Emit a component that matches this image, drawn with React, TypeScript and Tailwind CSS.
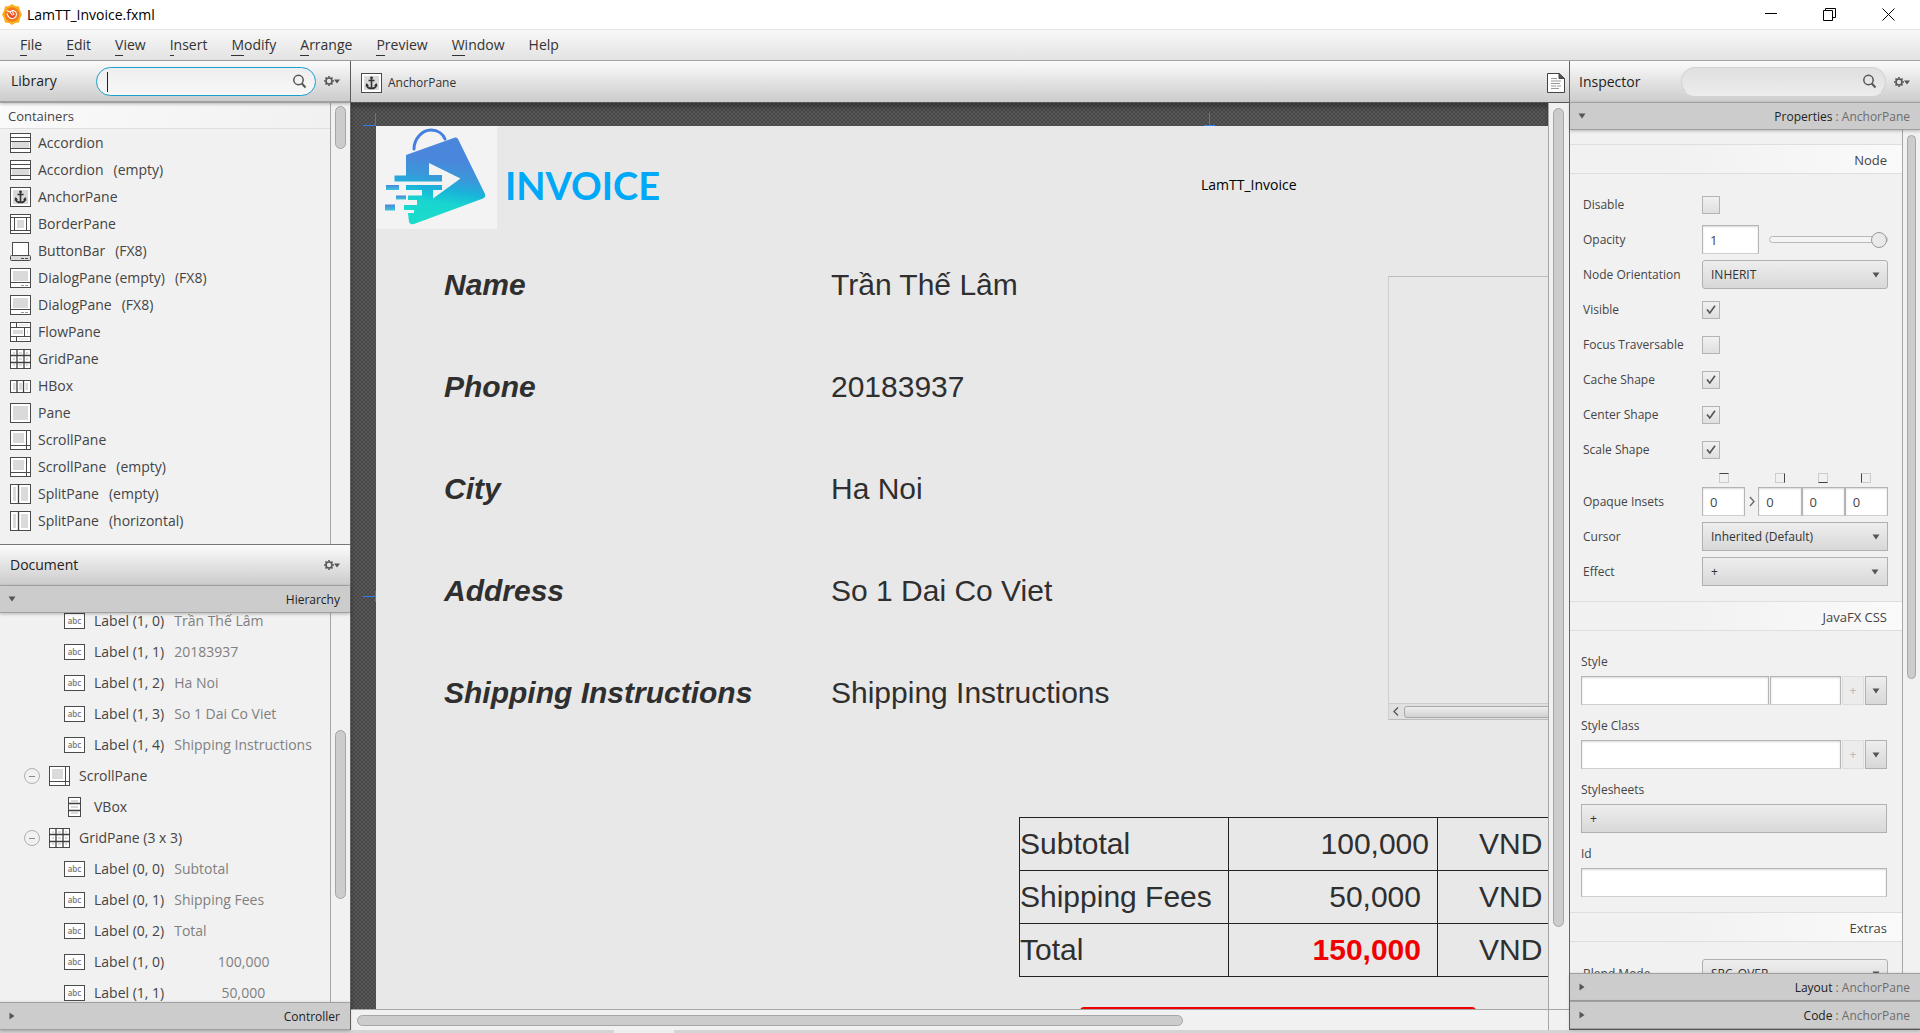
import React from "react";

const FONT = "font-['Open_Sans','Noto_Sans',sans-serif]";

/* ---------- icons ---------- */

type IconName =
  | "accordion"
  | "anchor"
  | "border"
  | "buttonbar"
  | "dialog"
  | "flow"
  | "grid"
  | "hbox"
  | "vbox"
  | "pane"
  | "scroll"
  | "split";

function NodeIcon({ name }: { name: IconName }) {
  const line = { stroke: "#4b4b4b", strokeWidth: 1, fill: "none" };
  const grey = "#dadada";
  const frame = <rect x="0.5" y="0.5" width="20" height="19" fill="#fff" stroke="#4b4b4b" />;
  const drawings: Record<IconName, React.ReactNode> = {
    accordion: (
      <>
        {frame}
        <rect x="2" y="9" width="17" height="6" fill={grey} />
        <path d="M0 4.5H21M0 8.5H21M0 15.5H21" {...line} />
      </>
    ),
    anchor: (
      <>
        {frame}
        <rect x="3" y="3" width="15" height="14" fill={grey} />
        <path d="M10.5 4V15.5M7.5 7.5H13.5M5.5 11.5C6 14.5 8 15.5 10.5 15.5S15 14.5 15.500 11.500" stroke="#333" strokeWidth="1.6" fill="none" />
        <circle cx="10.500" cy="4.700" r="1.300" fill="#333" />
        <path d="M4.500 13.500L5.500 10L8 12.500ZM16.500 13.500L15.500 10L13 12.500Z" fill="#333" />
      </>
    ),
    border: (
      <>
        {frame}
        <rect x="7" y="6" width="7" height="8" fill={grey} />
        <path d="M0 3.500H21M0 16.500H21M4.500 3.500V16.500M16.500 3.500V16.500" {...line} />
      </>
    ),
    buttonbar: (
      <>
        <rect x="2.500" y="1.500" width="16" height="13" fill="#fff" stroke="#4b4b4b" />
        <rect x="0.500" y="14.500" width="20" height="5" rx="1" fill={grey} stroke="#4b4b4b" />
        <path d="M11 17.500H14M15 17.500H18" {...line} />
      </>
    ),
    dialog: (
      <>
        {frame}
        <rect x="3" y="3" width="15" height="10" fill={grey} />
        <path d="M0 14.500H21" {...line} />
        <path d="M11 17.500H14M15 17.500H18" stroke="#999" />
      </>
    ),
    flow: (
      <>
        {frame}
        <rect x="3" y="8" width="10" height="4" fill={grey} />
        <path d="M0 5.500H21M0 14.500H21M6.500 0V5.500M14.500 5.500V14.500M6.500 14.500V20" {...line} />
        <path d="M9 3H18M9 17H18M17.500 8V12" stroke={grey} />
      </>
    ),
    grid: (
      <>
        {frame}
        <path d="M3 3H5V5H3ZM9 3H12V5H9ZM16 3H18V5H16ZM3 9H5V11H3ZM9 9H12V11H9ZM16 9H18V11H16ZM3 15H5V17H3ZM9 15H12V17H9ZM16 15H18V17H16Z" fill={grey} />
        <path d="M0 6.500H21M0 13.500H21M7 0V20M14 0V20" stroke="#3f3f3f" strokeWidth="1.300" />
      </>
    ),
    hbox: (
      <>
        <rect x="0.500" y="4.500" width="20" height="12" fill="#fff" stroke="#4b4b4b" />
        <path d="M3 7H5.500V14H3ZM9 7H12V14H9ZM15.500 7H18V14H15.500Z" fill={grey} />
        <path d="M7 4V17M13.500 4V17" stroke="#3f3f3f" strokeWidth="1.300" />
      </>
    ),
    vbox: (
      <>
        <rect x="4.500" y="0.500" width="12" height="19" fill="#fff" stroke="#4b4b4b" />
        <path d="M7 3H14V5H7ZM7 9H14V11H7ZM7 15H14V17H7Z" fill={grey} />
        <path d="M4 6.500H17M4 13.500H17" stroke="#3f3f3f" strokeWidth="1.300" />
      </>
    ),
    pane: (
      <>
        {frame}
        <rect x="3" y="3" width="15" height="14" fill={grey} />
      </>
    ),
    scroll: (
      <>
        {frame}
        <rect x="3" y="3" width="11" height="10" fill={grey} />
        <path d="M0 15.500H21M16.500 0V20" {...line} />
      </>
    ),
    split: (
      <>
        {frame}
        <path d="M3 3H6V17H3ZM11 3H18V17H11Z" fill={grey} />
        <path d="M8.500 0V20" stroke="#3f3f3f" strokeWidth="1.300" />
      </>
    ),
  };
  return (
    <svg width="21" height="20" viewBox="0 0 21 20" className="shrink-0" aria-hidden="true">
      {drawings[name]}
    </svg>
  );
}

function LabelIcon() {
  return (
    <span className="flex h-4 w-[21px] shrink-0 items-center justify-center border border-[#4b4b4b] bg-white text-[8px] leading-none font-semibold text-[#777]">
      abc
    </span>
  );
}

function Magnifier() {
  return (
    <svg width="15" height="15" viewBox="0 0 15 15" className="shrink-0" fill="none" stroke="#555" strokeWidth="1.500" aria-hidden="true">
      <circle cx="6.500" cy="6" r="4.700" />
      <path d="M9.800 9.500L13.500 13.500" strokeWidth="2" />
    </svg>
  );
}

function GearMenu({ label }: { label: string }) {
  return (
    <button aria-label={label} className="flex shrink-0 items-center">
      <svg width="16" height="12" viewBox="0 0 16 12" aria-hidden="true">
        <circle cx="5" cy="6" r="3" fill="none" stroke="#555" strokeWidth="1.600" />
        <path d="M5 1V2.500M5 9.500V11M0 6H1.500M8.500 6H10M1.500 2.500L2.600 3.600M7.400 8.400L8.500 9.500M1.500 9.500L2.600 8.400M7.400 3.600L8.500 2.500" stroke="#555" strokeWidth="1.600" />
        <path d="M10 4.500H16L13 8.500Z" fill="#555" />
      </svg>
    </button>
  );
}

function Arrow({ dir }: { dir: "down" | "right" }) {
  return (
    <svg width="8" height="8" viewBox="0 0 8 8" className="shrink-0" fill="#555" aria-hidden="true">
      {dir === "down" ? <path d="M0.500 1.500H7.500L4 6.500Z" /> : <path d="M1.500 0.500V7.500L6.500 4Z" />}
    </svg>
  );
}

function AppLogo() {
  return (
    <svg width="20" height="21" viewBox="0 0 20 21" aria-hidden="true">
      <path d="M10 0L13 2L17 2.500L18 6.500L20 10.500L18 14.500L17 18.500L13 19L10 21L7 19L3 18.500L2 14.500L0 10.500L2 6.500L3 2.500L7 2Z" fill="#fbb01c" />
      <circle cx="10" cy="10.500" r="7.300" fill="#f47a20" />
      <circle cx="10.500" cy="10.500" r="4" fill="#ee4a23" />
      <path d="M4.500 6.500L8 8C10 5.500 14 6.500 14.500 10C14.500 13.500 11 15.500 8 14C6 13 5.500 10.500 4.800 9.500M8 8L10.500 11.500M10.500 7.500L12 11" fill="none" stroke="#fff" strokeWidth="1.100" />
    </svg>
  );
}

function ShopLogo() {
  return (
    <svg width="121" height="103" viewBox="0 0 121 103" role="img" aria-label="Shop logo" className="bg-[#f3f3f3]">
      <defs>
        <linearGradient id="bag" x1="0.550" y1="0" x2="0.400" y2="1">
          <stop offset="0.250" stopColor="#4a86db" />
          <stop offset="0.450" stopColor="#3a98da" />
          <stop offset="0.600" stopColor="#18b4da" />
          <stop offset="0.750" stopColor="#18d6cf" />
          <stop offset="1" stopColor="#1adcca" />
        </linearGradient>
        <linearGradient id="dash" x1="0" y1="0" x2="0" y2="1">
          <stop offset="0" stopColor="#4a86db" />
          <stop offset="1" stopColor="#3dc4d8" />
        </linearGradient>
      </defs>
      <path d="M38 23C38 13 46 4 55 4C62 4 67 8 69 13" fill="none" stroke="#437fe0" strokeWidth="3" strokeLinecap="round" />
      <path
        d="M30 29L79 11.500Q81 11 82 13L109 68Q110 71 107 72.500L38 98Q34 99 33 96L32 87H38V84H28V79H41V74H32V69.500H46V64H30V59H66V64H57V72.500L84.500 52.500L53 37V49H66V55.500H18.500V49.500H30Z"
        fill="url(#bag)"
      />
      <rect x="10" y="59" width="13" height="5" fill="url(#dash)" />
      <rect x="20" y="69.500" width="10" height="4" fill="url(#dash)" />
      <rect x="9" y="78.500" width="10" height="6" fill="url(#dash)" />
    </svg>
  );
}

/* ---------- shared pieces ---------- */

const headerBg = "bg-linear-to-b from-[#fbfbfb] to-[#cccccc]";

function SearchBox({ label, active }: { label: string; active?: boolean }) {
  return (
    <div
      className={
        active
          ? "relative flex h-[29px] min-w-0 flex-1 items-center rounded-full border border-[#1a9fd0] bg-linear-to-b from-[#eeeeee] to-[#f8f8f8] pr-2"
          : "relative flex h-[29px] min-w-0 flex-1 items-center rounded-full border border-[#d2d2d2] border-b-[#eeeeee] bg-linear-to-b from-[#e0e0e0] to-[#ececec] pr-2"
      }
    >
      {active && <span className="absolute top-1 left-2.5 h-5 w-px bg-[#222]" />}
      <input aria-label={label} className="h-full min-w-0 flex-1 rounded-full bg-transparent px-3 text-sm outline-none" />
      <Magnifier />
    </div>
  );
}

function TitleBar({ dir, name, target }: { dir: "down" | "right"; name: string; target?: string }) {
  return (
    <button className="relative z-10 flex h-7 w-full shrink-0 items-center justify-between border-t border-b border-[#a0a0a0] bg-[#cccccc] pr-2.5 pl-2 text-xs text-[#222] shadow-[0_1px_3px_rgba(0,0,0,0.25)]">
      <Arrow dir={dir} />
      <span className="pt-0.5">
        {name}
        {target && <span className="text-[#6c6c6c]"> : {target}</span>}
      </span>
    </button>
  );
}

/* ---------- top bars ---------- */

const menus = ["File", "Edit", "View", "Insert", "Modify", "Arrange", "Preview", "Window"];

function WindowTitle() {
  return (
    <header className="flex h-[29px] shrink-0 items-center bg-white pl-0.5 text-sm text-black">
      <AppLogo />
      <h1 className="ml-[5px] flex-1">LamTT_Invoice.fxml</h1>
      <div className="flex items-center gap-[46px] pr-[25px]">
        <button aria-label="Minimize">
          <svg width="12" height="13" viewBox="0 0 12 13" stroke="#000"><path d="M0 5.500H12" /></svg>
        </button>
        <button aria-label="Restore">
          <svg width="13" height="13" viewBox="0 0 13 13" fill="none" stroke="#000"><path d="M0.500 2.500H9.500V12.500H0.500ZM2.500 2.500V0.500H12.500V9.500H9.500" /></svg>
        </button>
        <button aria-label="Close">
          <svg width="13" height="13" viewBox="0 0 13 13" stroke="#000"><path d="M0.500 0.500L12.500 12.500M12.500 0.500L0.500 12.500" /></svg>
        </button>
      </div>
    </header>
  );
}

function MenuBar() {
  return (
    <nav className="flex h-8 shrink-0 items-center gap-6 border-t border-b border-t-[#e6e6e6] border-b-[#a3a3a3] bg-linear-to-b from-[#f8f8f8] to-[#e3e3e3] pl-5 text-sm text-[#333]">
      {menus.map((m) => (
        <button key={m} className="leading-5">
          <span className="inline-block border-b border-[#333]">{m[0]}</span>
          {m.slice(1)}
        </button>
      ))}
      <button className="leading-5">Help</button>
    </nav>
  );
}

/* ---------- left column ---------- */

const library: [IconName, string, string?][] = [
  ["accordion", "Accordion"],
  ["accordion", "Accordion", "(empty)"],
  ["anchor", "AnchorPane"],
  ["border", "BorderPane"],
  ["buttonbar", "ButtonBar", "(FX8)"],
  ["dialog", "DialogPane (empty)", "(FX8)"],
  ["dialog", "DialogPane", "(FX8)"],
  ["flow", "FlowPane"],
  ["grid", "GridPane"],
  ["hbox", "HBox"],
  ["pane", "Pane"],
  ["scroll", "ScrollPane"],
  ["scroll", "ScrollPane", "(empty)"],
  ["split", "SplitPane", "(empty)"],
  ["split", "SplitPane", "(horizontal)"],
];

function LibraryPanel() {
  return (
    <section className="flex min-h-0 grow-483 basis-0 flex-col border-b border-[#777]">
      <div className={`relative z-10 flex h-[42px] shrink-0 items-center border-b-2 border-[#a0a0a0] pr-2.5 pl-[11px] shadow-[0_1px_3px_rgba(0,0,0,0.25)] ${headerBg}`}>
        <h2 className="w-[85px] shrink-0 text-sm text-[#222]">Library</h2>
        <SearchBox label="Search library" active />
        <span className="w-2 shrink-0" />
        <GearMenu label="Library options" />
      </div>
      <div className="flex min-h-0 flex-1">
        <div className="min-w-0 flex-1 overflow-hidden border-r border-[#a6a6a6]">
          <h3 className="flex h-[26px] items-center border-b border-[#dedede] bg-linear-to-r from-[#fafafa] to-[#f1f1f1] pt-0.5 pl-2 text-[13px] text-[#444]">Containers</h3>
          <ul>
            {library.map(([icon, name, note], i) => (
              <li key={i} className="flex h-[27px] items-center pl-2.5 text-sm text-[#444]">
                <NodeIcon name={icon} />
                <span className="ml-[7px]">{name}</span>
                {note && <span className="ml-2.5">{note}</span>}
              </li>
            ))}
          </ul>
        </div>
        <div className="w-[19px] pt-[3px] pl-1">
          <div className="h-[43px] w-[11px] rounded-full border border-[#a6a6a6] bg-[#cccccc]" />
        </div>
      </div>
    </section>
  );
}

type TreeItem = { kind: "label" | "parent" | "child"; name: string; icon?: IconName; text?: string };

const tree: TreeItem[] = [
  { kind: "label", name: "Label (1, 0)", text: "Trần Thế Lâm" },
  { kind: "label", name: "Label (1, 1)", text: "20183937" },
  { kind: "label", name: "Label (1, 2)", text: "Ha Noi" },
  { kind: "label", name: "Label (1, 3)", text: "So 1 Dai Co Viet" },
  { kind: "label", name: "Label (1, 4)", text: "Shipping Instructions" },
  { kind: "parent", name: "ScrollPane", icon: "scroll" },
  { kind: "child", name: "VBox", icon: "vbox" },
  { kind: "parent", name: "GridPane (3 x 3)", icon: "grid" },
  { kind: "label", name: "Label (0, 0)", text: "Subtotal" },
  { kind: "label", name: "Label (0, 1)", text: "Shipping Fees" },
  { kind: "label", name: "Label (0, 2)", text: "Total" },
  { kind: "label", name: "Label (1, 0)", text: "            100,000" },
  { kind: "label", name: "Label (1, 1)", text: "             50,000" },
];

function DocumentPanel() {
  return (
    <section className="flex min-h-0 grow-486 basis-0 flex-col">
      <div className={`flex h-10 shrink-0 items-center justify-between pr-2.5 pl-2.5 ${headerBg}`}>
        <h2 className="text-sm text-[#222]">Document</h2>
        <GearMenu label="Document options" />
      </div>
      <TitleBar dir="down" name="Hierarchy" />
      <div className="flex min-h-0 flex-1">
        <div className="min-w-0 flex-1 overflow-hidden border-r border-[#a6a6a6]">
          <ul className="-mt-[7px]">
            {tree.map((t, i) => (
              <li
                key={i}
                className={
                  t.kind === "parent"
                    ? "flex h-[31px] items-center pl-6 text-sm text-[#444]"
                    : "flex h-[31px] items-center pl-16 text-sm text-[#444]"
                }
              >
                {t.kind === "parent" && (
                  <button aria-label={`Collapse ${t.name}`} className="mr-[9px] flex size-4 items-center justify-center rounded-full border border-[#b0b0b0]">
                    <span className="h-px w-1.5 bg-[#8a8a8a]" />
                  </button>
                )}
                {t.icon ? <NodeIcon name={t.icon} /> : <LabelIcon />}
                <span className="ml-[9px] whitespace-nowrap">{t.name}</span>
                {t.text && <span className="ml-2.5 whitespace-pre text-[#808080]">{t.text}</span>}
              </li>
            ))}
          </ul>
        </div>
        <div className="flex w-[19px] flex-col pl-1">
          <div className="grow-118" />
          <div className="w-[11px] grow-168 rounded-full border border-[#a6a6a6] bg-[#cccccc]" />
          <div className="grow-103" />
        </div>
      </div>
      <TitleBar dir="right" name="Controller" />
    </section>
  );
}

/* ---------- canvas ---------- */

const details = [
  ["Name", "Trần Thế Lâm"],
  ["Phone", "20183937"],
  ["City", "Ha Noi"],
  ["Address", "So 1 Dai Co Viet"],
  ["Shipping Instructions", "Shipping Instructions"],
];

const cell = "h-[53px] border border-[#222] p-0 font-normal leading-none whitespace-nowrap";

function InvoicePage() {
  return (
    <div className="relative h-full bg-[#e8e8e8] font-['Liberation_Sans',Arial,sans-serif] text-[#2f2f2f]">
      <div className="absolute top-0 left-0">
        <ShopLogo />
      </div>
      <h2 className="absolute top-[31px] left-[129px] font-[Lato,sans-serif] text-[38px] leading-[56px] font-bold text-[#00a8f8]">INVOICE</h2>
      <p className={`absolute top-[49px] left-[825px] text-sm text-black ${FONT}`}>LamTT_Invoice</p>
      <dl className="absolute top-[107px] left-[68px] grid auto-rows-[102px] grid-cols-[387px_auto] items-center text-[30px] whitespace-nowrap">
        {details.map(([k, v]) => (
          <React.Fragment key={k}>
            <dt className="font-bold italic">{k}</dt>
            <dd>{v}</dd>
          </React.Fragment>
        ))}
      </dl>
      <div className="absolute top-[150px] left-[1012px] flex h-[444px] w-[300px] flex-col border border-[#bcbcbc] border-l-[#cfcfcf]">
        <div className="flex-1" />
        <div className="flex h-4 items-center gap-[5px] border-t border-[#cccccc] bg-[#e0e0e0] pl-1">
          <svg width="6" height="9" viewBox="0 0 6 9" fill="none" stroke="#555" strokeWidth="1.300" aria-hidden="true"><path d="M5 0.500L1 4.500L5 8.500" /></svg>
          <div className="h-3 flex-1 rounded-[3px] border border-[#a8a8a8] bg-linear-to-b from-[#ededed] to-[#d2d2d2]" />
        </div>
      </div>
      <table className="absolute top-[691px] left-[643px] w-[628px] table-fixed border-collapse text-[30px]">
        <tbody>
          <tr>
            <th scope="row" className={`${cell} text-left`}>Subtotal</th>
            <td className={`${cell} pr-2 text-right`}>100,000</td>
            <td className={`${cell} pl-[41px]`}>VND</td>
          </tr>
          <tr>
            <th scope="row" className={`${cell} text-left`}>Shipping Fees</th>
            <td className={`${cell} pr-4 text-right`}>50,000</td>
            <td className={`${cell} pl-[41px]`}>VND</td>
          </tr>
          <tr>
            <th scope="row" className={`${cell} text-left`}>Total</th>
            <td className={`${cell} pr-4 text-right`}><b className="text-[#f00000]">150,000</b></td>
            <td className={`${cell} pl-[41px]`}>VND</td>
          </tr>
        </tbody>
      </table>
      <button aria-label="Confirm" className="absolute top-[881px] left-[704px] h-12 w-[396px] rounded-sm border-2 border-[#f00000]" />
    </div>
  );
}

function AnchorMark({ d, className }: { d: string; className: string }) {
  return (
    <svg width="13" height="13" viewBox="0 0 13 13" fill="none" stroke="#2f7df0" strokeWidth="1" className={`absolute ${className}`} aria-hidden="true">
      <path d={d} />
    </svg>
  );
}

function Editor() {
  return (
    <main className="flex min-w-0 flex-1 flex-col">
      <div className={`relative z-10 flex h-[42px] shrink-0 items-center border-b border-[#555] pt-0.5 pr-1 pl-2.5 text-xs text-[#333] ${headerBg}`}>
        <NodeIcon name="anchor" />
        <span className="ml-1.5 flex-1">AnchorPane</span>
        <svg width="18" height="20" viewBox="0 0 18 20" fill="#fff" stroke="#444" aria-hidden="true">
          <path d="M0.500 0.500H12L17.500 5.500V19.500H0.500Z" />
          <path d="M12 0.500V5.500H17.500Z" fill="#555" />
          <path d="M4 5.500H10M4 8H14M4 10.500H13M4 13H9M10 13H14M4 15.500H12" stroke="#999" />
        </svg>
      </div>
      <div className="flex min-h-0 flex-1">
        <div className="relative min-w-0 flex-1 overflow-hidden border-r border-b border-[#a6a6a6] bg-[#4d4d4d] bg-[repeating-conic-gradient(#585858_0_25%,#464646_0_50%)] bg-size-[4px_4px] pt-[23px] pl-[25px] shadow-[inset_0_4px_4px_rgba(0,0,0,0.3)]">
          <AnchorMark className="top-2.5 left-3" d="M0 12.500H12.500V0" />
          <AnchorMark className="top-2.5 left-[852px]" d="M6.500 0V12.500M1 12.500H12" />
          <AnchorMark className="top-[487px] left-3" d="M0 6.500H12.500M12.500 1V12" />
          <InvoicePage />
        </div>
        <div className="flex w-[20px] shrink-0 flex-col border-b border-[#a6a6a6] bg-[#f1f1f1] pt-[5px] pl-1">
          <div className="w-[11px] grow-820 rounded-full border border-[#a6a6a6] bg-[#cccccc]" />
          <div className="grow-82" />
        </div>
      </div>
      <div className="flex h-5 shrink-0">
        <div className="flex flex-1 items-center border-r border-[#a6a6a6] pl-1.5">
          <div className="h-[11px] grow-826 rounded-full border border-[#a6a6a6] bg-[#cccccc]" />
          <div className="grow-366" />
        </div>
        <div className="w-[20px]" />
      </div>
    </main>
  );
}

/* ---------- inspector ---------- */

const field = "h-[29px] min-w-0 border border-[#b4b4b4] border-b-[#cfcfcf] bg-white px-[7px] text-[13px] text-[#444] shadow-[inset_0_1px_2px_rgba(0,0,0,0.15)] outline-none";
const buttonFace = "border border-[#b0b0b0] bg-linear-to-b from-[#eeeeee] to-[#d8d8d8] text-xs text-[#333]";

function SectionTitle({ children }: { children: string }) {
  return (
    <h3 className="flex h-[30px] shrink-0 items-center justify-end border-t border-b border-[#dedede] bg-linear-to-r from-[#f1f1f1] from-30% to-[#fafafa] pt-[3px] pr-[15px] text-[13px] text-[#444]">
      {children}
    </h3>
  );
}

function Row({ label, id, children }: { label: string; id: string; children: React.ReactNode }) {
  return (
    <div className="flex h-[35px] items-center">
      <label htmlFor={id} className="w-[119px] shrink-0 text-xs whitespace-nowrap">{label}</label>
      {children}
    </div>
  );
}

function Check({ id, on }: { id: string; on?: boolean }) {
  return (
    <span className="relative flex">
      <input
        id={id}
        type="checkbox"
        defaultChecked={on}
        className="peer size-[18px] appearance-none border border-[#b4b4b4] bg-linear-to-b from-[#f1f1f1] to-[#dfdfdf]"
      />
      <svg width="10" height="9" viewBox="0 0 10 9" className="pointer-events-none absolute top-1 left-1 hidden peer-checked:block" fill="none" stroke="#555" strokeWidth="1.600" aria-hidden="true">
        <path d="M1 4.500L3.800 8L9 0.800" />
      </svg>
    </span>
  );
}

function Combo({ id, value, rounded }: { id: string; value: string; rounded?: boolean }) {
  return (
    <span className="relative flex flex-1 items-center">
      <select id={id} className={`h-[29px] w-full appearance-none px-2 ${buttonFace} ${rounded ? "rounded-[3px]" : "rounded-none"}`}>
        <option>{value}</option>
      </select>
      <span className="pointer-events-none absolute right-2">
        <Arrow dir="down" />
      </span>
    </span>
  );
}

function AddPair({ label }: { label: string }) {
  return (
    <>
      <button disabled aria-label={`Add ${label}`} className="h-[29px] w-[22px] border border-[#dddddd] bg-[#ececec] text-[13px] text-[#bbb]">+</button>
      <button aria-label={`${label} options`} className={`flex h-[29px] w-[22px] items-center justify-center ${buttonFace}`}>
        <Arrow dir="down" />
      </button>
    </>
  );
}

const insetSides = [
  { name: "top", mark: "border-t-[#444]" },
  { name: "right", mark: "border-r-[#444]" },
  { name: "bottom", mark: "border-b-[#444]" },
  { name: "left", mark: "border-l-[#444]" },
];

function Inset({ side }: { side: number }) {
  const s = insetSides[side];
  return (
    <span className="flex flex-1 flex-col items-center gap-1">
      <span className={`size-2.5 border border-[#cccccc] ${s.mark}`} />
      <input id={`inset-${s.name}`} aria-label={`Opaque inset ${s.name}`} defaultValue="0" className={`w-full ${field}`} />
    </span>
  );
}

function Inspector() {
  return (
    <aside className="flex w-[351px] shrink-0 flex-col border-b border-l border-[#666]">
      <div className={`flex h-[41px] shrink-0 items-center pr-2.5 pl-[9px] ${headerBg}`}>
        <h2 className="w-[102px] shrink-0 text-sm text-[#222]">Inspector</h2>
        <SearchBox label="Search inspector" />
        <span className="w-2 shrink-0" />
        <GearMenu label="Inspector options" />
      </div>
      <TitleBar dir="down" name="Properties" target="AnchorPane" />
      <div className="flex min-h-0 flex-1">
        <div className="min-w-0 flex-1 overflow-hidden border-r border-[#a6a6a6] pt-3.5 text-[#444]">
          <SectionTitle>Node</SectionTitle>
          <div className="flex flex-col pt-[13px] pr-3.5 pb-3 pl-[13px]">
            <Row label="Disable" id="disable"><Check id="disable" /></Row>
            <Row label="Opacity" id="opacity">
              <input id="opacity" defaultValue="1" className={`w-[57px] ${field}`} />
              <input
                type="range"
                aria-label="Opacity level"
                defaultValue={100}
                className="ml-2.5 h-4 min-w-0 flex-1 appearance-none bg-transparent [&::-webkit-slider-runnable-track]:h-[7px] [&::-webkit-slider-runnable-track]:rounded-full [&::-webkit-slider-runnable-track]:border [&::-webkit-slider-runnable-track]:border-[#b8b8b8] [&::-webkit-slider-runnable-track]:bg-[#f4f4f4] [&::-webkit-slider-thumb]:-mt-[5px] [&::-webkit-slider-thumb]:size-4 [&::-webkit-slider-thumb]:appearance-none [&::-webkit-slider-thumb]:rounded-full [&::-webkit-slider-thumb]:border [&::-webkit-slider-thumb]:border-[#999] [&::-webkit-slider-thumb]:bg-[#e9e9e9]"
              />
            </Row>
            <Row label="Node Orientation" id="orientation"><Combo id="orientation" value="INHERIT" rounded /></Row>
            <Row label="Visible" id="visible"><Check id="visible" on /></Row>
            <Row label="Focus Traversable" id="focus"><Check id="focus" /></Row>
            <Row label="Cache Shape" id="cache"><Check id="cache" on /></Row>
            <Row label="Center Shape" id="center"><Check id="center" on /></Row>
            <Row label="Scale Shape" id="scale"><Check id="scale" on /></Row>
            <div className="flex items-end pt-1.5 pb-[3px]">
              <label htmlFor="inset-top" className="w-[119px] shrink-0 text-xs leading-[29px]">Opaque Insets</label>
              <Inset side={0} />
              <svg width="13" height="29" viewBox="0 0 13 29" fill="none" stroke="#666" strokeWidth="1.300" aria-hidden="true"><path d="M5 10L9 14.500L5 19" /></svg>
              <Inset side={1} />
              <Inset side={2} />
              <Inset side={3} />
            </div>
            <Row label="Cursor" id="cursor"><Combo id="cursor" value="Inherited (Default)" /></Row>
            <Row label="Effect" id="effect">
              <button id="effect" className={`flex h-[29px] flex-1 items-center justify-between px-2 ${buttonFace}`}>
                + <Arrow dir="down" />
              </button>
            </Row>
          </div>
          <SectionTitle>JavaFX CSS</SectionTitle>
          <div className="flex flex-col pt-2.5 pr-[15px] pb-[15px] pl-[11px] text-xs">
            <label htmlFor="style" className="pt-2.5 pb-[3px] leading-[22px]">Style</label>
            <div className="flex gap-px">
              <input id="style" className={`flex-1 ${field}`} />
              <input aria-label="Style value" className={`w-[71px] ${field}`} />
              <AddPair label="style" />
            </div>
            <label htmlFor="style-class" className="pt-2.5 pb-[3px] leading-[22px]">Style Class</label>
            <div className="flex gap-px">
              <input id="style-class" className={`flex-1 ${field}`} />
              <AddPair label="style class" />
            </div>
            <label htmlFor="stylesheets" className="pt-2.5 pb-[3px] leading-[22px]">Stylesheets</label>
            <button id="stylesheets" className={`h-[29px] px-2 text-left ${buttonFace}`}>+</button>
            <label htmlFor="node-id" className="pt-2.5 pb-[3px] leading-[22px]">Id</label>
            <input id="node-id" className={field} />
          </div>
          <SectionTitle>Extras</SectionTitle>
          <div className="pt-3.5 pr-3.5 pl-[13px]">
            <Row label="Blend Mode" id="blend"><Combo id="blend" value="SRC_OVER" rounded /></Row>
          </div>
        </div>
        <div className="flex w-[17px] shrink-0 flex-col pt-[5px] pl-1">
          <div className="w-[9px] grow-543 rounded-full border border-[#a6a6a6] bg-[#cccccc]" />
          <div className="grow-295" />
        </div>
      </div>
      <TitleBar dir="right" name="Layout" target="AnchorPane" />
      <TitleBar dir="right" name="Code" target="AnchorPane" />
    </aside>
  );
}

export default function App() {
  return (
    <div className={`flex h-screen flex-col overflow-hidden bg-[#f1f1f1] ${FONT}`}>
      <WindowTitle />
      <MenuBar />
      <div className="flex min-h-0 flex-1">
        <div className="flex w-[351px] shrink-0 flex-col border-r border-[#666]">
          <LibraryPanel />
          <DocumentPanel />
        </div>
        <Editor />
        <Inspector />
      </div>
      <div className="flex h-[3px] shrink-0 bg-[#d4d4d4]">
        <div className="ml-[32%] w-[60px] bg-[#eeeeee]" />
      </div>
    </div>
  );
}
